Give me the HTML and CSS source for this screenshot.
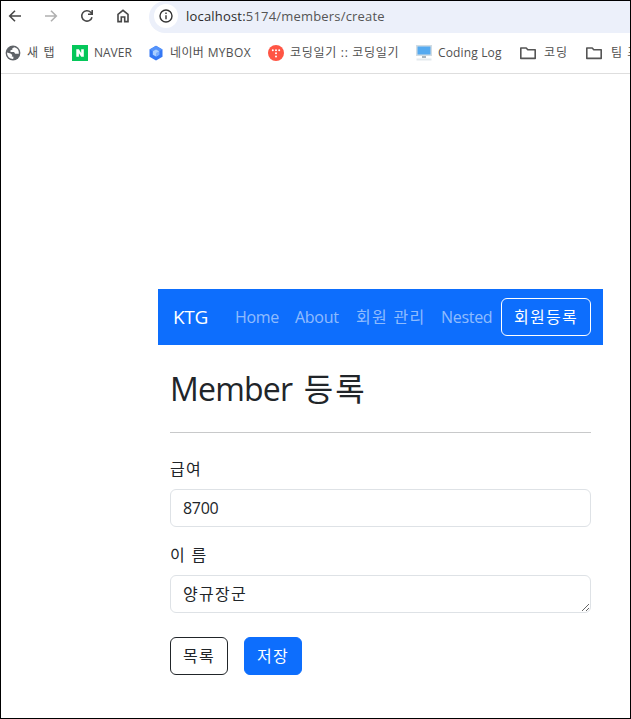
FILE: index.html
```html
<!DOCTYPE html>
<html lang="ko">
<head>
<meta charset="utf-8">
<title>Member 등록</title>
<link rel="stylesheet" href="styles.css">
</head>
<body>
<div class="window">
  <header class="toolbar">
    <svg class="tool" viewBox="0 0 16 16"><path d="M14 8H3M8 2.7L2.7 8L8 13.3"/></svg>
    <svg class="tool off" viewBox="0 0 16 16"><path d="M2 8h11M8 2.7L13.3 8L8 13.3"/></svg>
    <svg class="tool" viewBox="0 0 16 16"><path d="M13 9.2A5.2 5.2 0 1 1 11.7 4.3L13 5.6M13.2 2v4.2H9"/></svg>
    <svg class="tool" viewBox="0 0 16 16"><path d="M3 13.6V6.3L8 2.3l5 4v7.3H9.7V9H6.3v4.6z"/></svg>
    <div class="address">
      <span class="info"><svg viewBox="0 0 16 16"><circle cx="8" cy="8" r="6"/><path d="M8 7.3V11.2M8 4.6v1.5"/></svg></span>
      <span class="url"><b>localhost:</b>5174/members/create</span>
    </div>
  </header>
  <nav class="bookmarks">
    <a class="mark tab"><svg viewBox="0 0 16 16"><circle cx="8" cy="8" r="7.4" fill="#5f6368"/><path d="M9.500 2.300L7.300 3.200 7.500 4.600 5.300 5.600 5.600 7H9l1.200 1.700h3.600A6 6 0 0 0 9.500 2.300zM2 7.600l3.500 1 1.800 1.500-.6 1.300 1.800.4L8.200 14A6 6 0 0 1 2 7.600z" fill="#fff"/></svg><span>새 탭</span></a>
    <a class="mark naver"><svg viewBox="0 0 16 16"><path d="M0 0h16v16H0z" fill="#05c75a"/><path d="M4.300 4.300h2.600l2.300 3.700V4.300h2.600v7.500H9.200L6.900 8.200v3.600H4.300z" fill="#fff"/></svg><span>NAVER</span></a>
    <a class="mark mybox"><svg viewBox="0 0 16 16"><path d="M8 .8l6.500 3.700v7.200L8 15.400l-6.500-3.700V4.500z" fill="#3478f5"/><path d="M8 .8l6.500 3.700L8 8 1.500 4.500z" fill="#5593fb"/><path d="M8 4.500l3.200 1.800v3.500L8 11.600 4.800 9.800V6.300z" fill="#a9ceff"/><path d="M8 8l3.200-1.700v3.500L8 11.600z" fill="#79adff"/></svg><span>네이버 MYBOX</span></a>
    <a class="mark diary"><svg viewBox="0 0 16 16"><circle cx="8" cy="8" r="8" fill="#ff5544"/><g fill="#fff"><circle cx="4.800" cy="5.200" r="1"/><circle cx="8" cy="5.200" r="1"/><circle cx="11.200" cy="5.200" r="1"/><circle cx="8" cy="8.300" r="1"/><circle cx="8" cy="11.400" r="1"/></g></svg><span>코딩일기 :: 코딩일기</span></a>
    <a class="mark log"><svg viewBox="0 0 16 16"><path d="M0 0h16v11H0z" fill="#d1dce3"/><path d="M1.500 1.500h13v8h-13z" fill="#55aaf0"/><path d="M6 11h4v2H6z" fill="#a9b6bf"/><path d="M.5 13.500h15v2H.5z" fill="#e3e9ed"/></svg><span>Coding Log</span></a>
    <a class="mark coding"><svg viewBox="0 0 16 16"><path class="folder" d="M.8 3h5.400l1.600 1.800h7.400v8.600H.8z"/></svg><span>코딩</span></a>
    <a class="mark team"><svg viewBox="0 0 16 16"><path class="folder" d="M.8 3h5.400l1.600 1.800h7.400v8.600H.8z"/></svg><span>팀 프로젝트</span></a>
  </nav>
  <main class="page">
    <nav class="navbar">
      <a class="brand">KTG</a>
      <a class="link home">Home</a>
      <a class="link about">About</a>
      <a class="link manage ko">회원 관리</a>
      <a class="link nested">Nested</a>
      <button class="btn light ko">회원등록</button>
    </nav>
    <section class="content">
      <h2>Member <span>등록</span></h2>
      <hr>
      <label class="ko" for="pay">급여</label>
      <input id="pay" class="control" value="8700">
      <label class="ko" for="name">이 름</label>
      <textarea id="name" class="control ko" rows="1">양규장군</textarea>
      <div class="actions">
        <button class="btn dark ko">목록</button>
        <button class="btn primary ko">저장</button>
      </div>
    </section>
  </main>
</div>
</body>
</html>
```
FILE: styles.css
```css
* { box-sizing: border-box; }
body {
  margin: 0;
  font: 16px/24px "Open Sans", "Noto Sans CJK KR", sans-serif;
  color: #212529;
  background: #fff;
}
.window {
  width: 631px;
  height: 719px;
  border: 1px solid #000;
  overflow: hidden;
}
.toolbar {
  display: flex;
  align-items: center;
  height: 32px;
  padding-left: 6px;
}
.tool {
  flex: none;
  width: 16px;
  height: 16px;
  margin: -2px 20px 0 0;
  fill: none;
  stroke: #474747;
  stroke-width: 1.6;
}
.tool.off { stroke: #b0b0b0; }
.address {
  flex: 1;
  display: flex;
  align-items: center;
  height: 32px;
  margin-left: -2px;
  padding-left: 5px;
  background: #ecf0fa;
  border-radius: 16px 0 0 16px;
}
.info {
  display: flex;
  align-items: center;
  justify-content: center;
  width: 24px;
  height: 24px;
  margin-top: -2px;
  border-radius: 50%;
  background: #fff;
}
.info svg {
  width: 16px;
  height: 16px;
  fill: none;
  stroke: #333;
  stroke-width: 1.4;
}
.url {
  margin: -2px 0 0 8px;
  font-size: 13px;
  letter-spacing: .19px;
  color: #555;
}
.url b { font-weight: inherit; color: #2c2c2c; }
.bookmarks {
  display: flex;
  height: 41px;
  padding-left: 4px;
  border-bottom: 1px solid #dedede;
  overflow: hidden;
}
.mark {
  flex: none;
  display: flex;
  align-items: center;
  gap: 6px;
  height: 39px;
  font-size: 12px;
  color: #505050;
  white-space: nowrap;
}
.mark svg { flex: none; width: 16px; height: 16px; }
.folder { fill: none; stroke: #555; stroke-width: 1.6; stroke-linejoin: round; }
.tab { width: 67px; letter-spacing: 1.2px; }
.naver { width: 76px; }
.mybox { width: 120px; letter-spacing: .35px; }
.diary { width: 148px; letter-spacing: .7px; }
.log { width: 104px; letter-spacing: .15px; }
.coding { width: 66px; gap: 8px; letter-spacing: 1px; }
.team { gap: 9px; letter-spacing: 1px; }
.page { width: 445px; margin: 215px 0 0 157px; }
.navbar {
  display: flex;
  align-items: center;
  height: 56px;
  padding: 0 12px 0 15px;
  background: #0d6efd;
}
.brand { width: 62px; font-size: 19px; letter-spacing: -.3px; color: #fff; }
.link { color: rgba(255, 255, 255, .55); letter-spacing: -.3px; white-space: nowrap; }
.link.ko { letter-spacing: 1.3px; }
.home { width: 60px; }
.about { width: 61px; }
.manage { width: 85px; }
.nested { width: 60px; }
.ko { letter-spacing: 1.3px; }
.btn {
  height: 38px;
  padding: 0 0 0 12px;
  border: 1px solid;
  border-radius: 6px;
  background: transparent;
  font: inherit;
  text-align: left;
  white-space: nowrap;
}
.btn.ko { letter-spacing: 1.3px; }
.light { width: 90px; color: #fff; }
.dark { width: 58px; color: #212529; }
.primary { width: 58px; color: #fff; background: #0d6efd; border-color: #0d6efd; }
.content { padding: 25px 12px 0; }
h2 {
  margin: 0;
  font-size: 32px;
  line-height: 38px;
  font-weight: 400;
  letter-spacing: -.8px;
  word-spacing: 4px;
  white-space: nowrap;
}
h2 span { letter-spacing: 2px; }
hr { margin: 24px 0 24px; border: 0; border-top: 1px solid #c8c9ca; }
label { display: block; margin-bottom: 8px; }
.control {
  display: block;
  width: 100%;
  height: 38px;
  margin: 0 0 16px;
  padding: 6px 12px;
  border: 1px solid #dee2e6;
  border-radius: 6px;
  background: #fff;
  color: #212529;
  font: inherit;
  letter-spacing: -.3px;
  overflow: hidden;
}
textarea.control { resize: vertical; letter-spacing: 1.3px; }
.actions { display: flex; gap: 16px; margin-top: 24px; }
```
